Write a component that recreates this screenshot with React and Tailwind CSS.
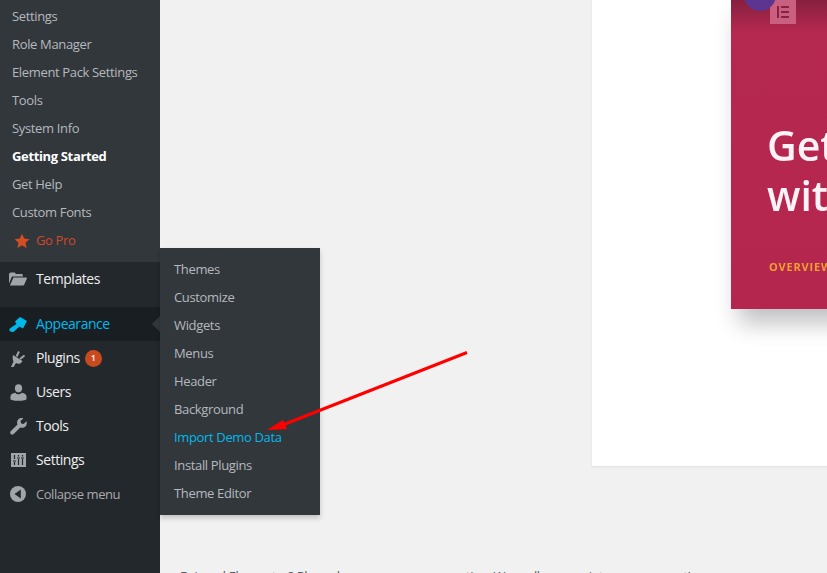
import React from "react";

const subItems = [
  "Settings",
  "Role Manager",
  "Element Pack Settings",
  "Tools",
  "System Info",
  "Getting Started",
  "Get Help",
  "Custom Fonts",
];

const flyoutItems = [
  "Themes",
  "Customize",
  "Widgets",
  "Menus",
  "Header",
  "Background",
  "Import Demo Data",
  "Install Plugins",
  "Theme Editor",
];

function FolderIcon() {
  return (
    <svg width="18" height="14" viewBox="0 0 18 14" fill="#a0a5aa">
      <path d="M0 2.5C0 1.2.8.5 1.8.5h3.4c.8 0 1.3.7 1.5 1.500h5.800c.8 0 1.300.5 1.300 1.300V4.500H4.200C3.200 4.500 2.700 5 2.400 5.800L0 11.500z" />
      <path d="M4.500 5.500H17.300c.5 0 .8.4.6.9l-2.600 6.100c-.2.6-.7 1-1.400 1H.9z" />
    </svg>
  );
}

function BrushIcon() {
  return (
    <svg width="18" height="15" viewBox="0 0 18 15" fill="#00b9eb">
      <path d="M11 0 18 4 14 11.500 10.500 9.500 5 14.500C4 15.500 1 15 .5 13.500 0 12.500.5 11.500 1.500 11L7.500 7 6 4.500z" />
    </svg>
  );
}

function PluginIcon() {
  return (
    <svg width="17" height="17" viewBox="0 0 17 17" fill="#a0a5aa">
      <path d="M3 5 12.500 11C11 14 8 14.500 6 13L3.500 17H1L3.500 11.500C2.500 9.500 2.500 7 3 5Z" />
      <path
        d="M6.500 6.500 9 1.500M10 9 14.500 5.500"
        stroke="#a0a5aa"
        strokeWidth="2"
        fill="none"
      />
    </svg>
  );
}

function UserIcon() {
  return (
    <svg width="17" height="17" viewBox="0 0 17 17" fill="#a0a5aa">
      <ellipse cx="8.500" cy="4.300" rx="3.600" ry="4.100" />
      <path d="M.5 12.500C.5 10.300 2.600 9.300 5.300 8.700 6.200 9.800 7.300 10.200 8.500 10.200 9.700 10.200 10.800 9.800 11.700 8.700 14.400 9.300 16.500 10.300 16.500 12.500V15C16.500 16.200 13 16.800 8.500 16.800 4 16.800.5 16.200.5 15z" />
    </svg>
  );
}

function WrenchIcon() {
  return (
    <svg width="17" height="17" viewBox="0 0 17 17" fill="#a0a5aa">
      <path d="M16.500 3.300 13.600 6.100 11.200 5.400 10.500 3 13.400.3C11.500-.3 9.600.1 8.400 1.300 7 2.700 6.700 4.700 7.500 6.400L.9 13C-.1 14 .1 15.200.7 15.900 1.400 16.700 2.800 16.900 3.700 16L10.300 9.400C12 10.200 14 9.900 15.400 8.500 16.700 7.200 17.100 5.100 16.500 3.300Z" />
    </svg>
  );
}

function SlidersIcon() {
  return (
    <svg width="15" height="14" viewBox="0 0 15 14">
      <rect width="15" height="14" fill="#a0a5aa" />
      <path
        d="M3.500 2v4M3.500 9v3M2 8h3M7.500 2v1.500M7.500 6v6M6 5h3M11.500 2v1.500M11.500 6v6M10 5h3"
        stroke="#23282d"
        strokeWidth="1.200"
        fill="none"
      />
    </svg>
  );
}

function CollapseIcon() {
  return (
    <svg width="16" height="16" viewBox="0 0 16 16">
      <circle cx="8" cy="8" r="8" fill="#a0a5aa" />
      <path d="M10.800 3.500V12.500L4.500 8z" fill="#23282d" />
    </svg>
  );
}

function MenuRow({ icon, label, active, muted, children }) {
  return (
    <div
      className={`relative flex h-[34px] items-center ${
        active ? "bg-[#191e23] text-[#00b9eb]" : "text-[#eeeeee]"
      }`}
    >
      <span className="flex w-9 shrink-0 items-center justify-center">
        {icon}
      </span>
      <span
        className={
          muted
            ? "pt-0.5 text-[13px] tracking-[-0.45px] text-[#aaaaaa]"
            : "text-sm tracking-[-0.45px]"
        }
      >
        {label}
      </span>
      {children}
    </div>
  );
}

export default function App() {
  return (
    <div className="relative flex h-[573px] w-[827px] overflow-hidden bg-[#f1f1f1] font-['Open_Sans',sans-serif]">
      <aside className="w-40 shrink-0 bg-[#23282d]">
        <div className="bg-[#32373c] pt-[3px] pb-[7px] text-[13px] tracking-[-0.35px] text-[#b4b9be]">
          {subItems.map((item) => (
            <div
              key={item}
              className={`flex h-7 items-center pl-3 ${
                item === "Getting Started" ? "font-bold text-white" : ""
              }`}
            >
              {item}
            </div>
          ))}
          <div className="flex h-7 items-center pl-3.5 text-[#d0492a]">
            <svg width="16" height="16" viewBox="0 0 24 24" fill="#d54e21">
              <path d="M12 1l3.300 7.400 7.700.8-5.800 5.300 1.700 8L12 18.400 5.100 22.500l1.700-8L1 9.200l7.700-.8z" />
            </svg>
            <span className="ml-1.5">Go Pro</span>
          </div>
        </div>

        <MenuRow icon={<FolderIcon />} label="Templates" />
        <div className="mt-[11px]">
          <MenuRow icon={<BrushIcon />} label="Appearance" active>
            <span className="absolute top-[9px] right-0 h-0 w-0 border-y-8 border-r-8 border-y-transparent border-r-[#32373c]" />
          </MenuRow>
          <MenuRow icon={<PluginIcon />} label="Plugins">
            <span className="ml-[5px] flex h-[17px] w-[17px] items-center justify-center rounded-full bg-[#ca4a1f] text-[9px] font-semibold text-white">
              1
            </span>
          </MenuRow>
          <MenuRow icon={<UserIcon />} label="Users" />
          <MenuRow icon={<WrenchIcon />} label="Tools" />
          <MenuRow icon={<SlidersIcon />} label="Settings" />
          <MenuRow icon={<CollapseIcon />} label="Collapse menu" muted />
        </div>
      </aside>

      <main className="min-w-0 flex-1">
        <div className="ml-[432px] h-[466px] w-[400px] bg-white pl-[139px] shadow-[0_1px_2px_rgba(0,0,0,0.08)]">
          <div className="relative h-[309px] w-[300px] bg-[linear-gradient(180deg,#86203f_0px,#b5284f_32px,#b5264e_100%)] pt-[120px] pl-[36px] shadow-[8px_14px_22px_rgba(0,0,0,0.25)]">
            <div className="absolute top-0 left-[39px] flex h-6 w-[26px] items-center justify-center bg-[#c9607f]">
              <svg width="12" height="12" viewBox="0 0 12 12" fill="#8a1f45">
                <path d="M0 0h2v12H0zM4 0h8v2H4zM4 5h8v2H4zM4 10h8v2H4z" />
              </svg>
            </div>
            <div className="absolute top-[-21px] left-[13px] h-8 w-8 rounded-full bg-[#5b3590]" />
            <div className="text-[41px] leading-[50px] font-semibold whitespace-nowrap text-[#fdf3f6] blur-[0.4px]">
              Get started
              <br />
              with
            </div>
            <div className="mt-[39px] ml-0.5 text-[11px] font-bold tracking-[0.8px] whitespace-nowrap text-[#f0a030] blur-[0.3px]">
              OVERVIEW
            </div>
          </div>
        </div>
        <p className="mt-[100px] ml-5 text-[13px] leading-5 tracking-[-0.35px] whitespace-nowrap text-[#555d66]">
          Enjoyed Elementor? Please leave us a{" "}
          <span className="text-[10px] tracking-[2px]">★★★★★</span> rating. We
          really appreciate your support!
        </p>
      </main>

      <div className="absolute top-[248px] left-40 w-40 bg-[#32373c] pt-2 pb-[7px] text-[13px] tracking-[-0.35px] text-[#b4b9be] shadow-[0_3px_5px_rgba(0,0,0,0.2)]">
        {flyoutItems.map((item) => (
          <div
            key={item}
            className={`flex h-7 items-center pl-3.5 ${
              item === "Import Demo Data" ? "text-[#00b9eb]" : ""
            }`}
          >
            {item}
          </div>
        ))}
      </div>

      <svg
        className="absolute top-[345px] left-[260px]"
        width="215"
        height="95"
        viewBox="0 0 215 95"
      >
        <path d="M207 7.500 20 81" stroke="#ff0000" strokeWidth="3" fill="none" />
        <path d="M7 85 23 75 27 84z" fill="#ff0000" />
      </svg>
    </div>
  );
}
